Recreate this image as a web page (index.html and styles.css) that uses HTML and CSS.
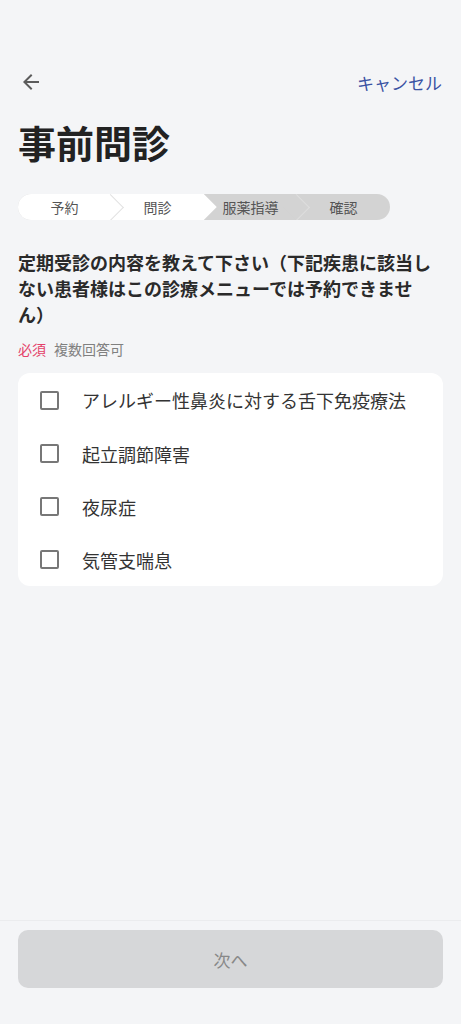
FILE: index.html
```html
<!DOCTYPE html>
<html lang="ja">
<head>
  <meta charset="UTF-8">
  <title>事前問診</title>
  <link rel="stylesheet" href="styles.css">
</head>
<body>
  <div class="page">
    <!-- header -->
    <div class="top-bar">
      <svg class="back-icon" viewBox="0 0 24 24" width="24" height="24">
        <path d="M20 11H7.83l5.59-5.59L12 4l-8 8 8 8 1.41-1.41L7.83 13H20v-2z" fill="#5c5c5c"/>
      </svg>
      <span class="cancel">キャンセル</span>
    </div>

    <h1 class="title">事前問診</h1>

    <!-- steps -->
    <div class="steps">
      <div class="step done">予約</div>
      <div class="step current">問診</div>
      <div class="step todo">服薬指導</div>
      <div class="step last">確認</div>
    </div>

    <div class="question">定期受診の内容を教えて下さい（下記疾患に該当しない患者様はこの診療メニューでは予約できません）</div>
    <div class="tags">
      <span class="required">必須</span>
      <span class="multi">複数回答可</span>
    </div>

    <div class="card">
      <label class="option"><span class="box"></span>アレルギー性鼻炎に対する舌下免疫療法</label>
      <label class="option"><span class="box"></span>起立調節障害</label>
      <label class="option"><span class="box"></span>夜尿症</label>
      <label class="option"><span class="box"></span>気管支喘息</label>
    </div>

    <div class="footer">
      <button class="next-button" disabled>次へ</button>
    </div>
  </div>
</body>
</html>
```

FILE: styles.css
```css
body {
  margin: 0;
  background: #f4f5f7;
  font-family: "Noto Sans CJK JP", "Noto Sans", sans-serif;
  color: #2a2a2a;
}

.page {
  display: flex;
  flex-direction: column;
  height: 1024px;
  overflow: hidden;
}

.top-bar {
  display: flex;
  align-items: center;
  justify-content: space-between;
  height: 44px;
  margin-top: 60px;
  padding: 0 19px 0 19px;
}

.cancel {
  font-size: 17px;
  color: #3a52a3;
}

.title {
  margin: 14px 18px 0;
  font-size: 38px;
  line-height: 48px;
  font-weight: bold;
  color: #222;
}

.steps {
  display: flex;
  width: 372px;
  height: 26px;
  margin: 28px 18px 0;
  border-radius: 13px;
  overflow: hidden;
  background: #d3d3d3;
}

.step {
  flex: 1;
  position: relative;
  display: flex;
  align-items: center;
  justify-content: center;
  font-size: 14px;
  color: #555;
}

.step.done, .step.current {
  background: #fff;
}

/* chevron between steps */
.step::after {
  content: "";
  position: absolute;
  top: 4px;
  right: -9px;
  width: 18px;
  height: 18px;
  transform: rotate(45deg);
  z-index: 1;
}

.step.done::after {
  background: #fff;
  border-top: 1px solid #e2e2e2;
  border-right: 1px solid #e2e2e2;
}

.step.current::after {
  background: #fff;
}

.step.todo::after {
  background: #d3d3d3;
  border-top: 1px solid #dedede;
  border-right: 1px solid #dedede;
}

.step.last::after {
  display: none;
}

.question {
  width: 417px;
  margin: 29px 18px 0;
  font-size: 18px;
  line-height: 26px;
  font-weight: bold;
  color: #2a2a2a;
}

.tags {
  display: flex;
  gap: 8px;
  margin: 12px 18px 0;
  font-size: 14px;
  line-height: 20px;
}

.required {
  color: #e4416a;
}

.multi {
  color: #808080;
}

.card {
  margin: 14px 18px 0;
  background: #fff;
  border-radius: 12px;
}

.option {
  display: flex;
  align-items: center;
  gap: 23px;
  height: 53px;
  padding: 0 22px;
  font-size: 18px;
  color: #333;
}

.option:first-child {
  height: 54px;
}

.box {
  width: 15px;
  height: 15px;
  border: 2px solid #777;
  border-radius: 2px;
}

.footer {
  margin-top: auto;
  padding: 9px 18px 36px;
  border-top: 1px solid #ebecee;
}

.next-button {
  width: 100%;
  height: 58px;
  border: none;
  border-radius: 10px;
  background: #d6d7d9;
  font-family: inherit;
  font-size: 17px;
  color: #888;
}
```
